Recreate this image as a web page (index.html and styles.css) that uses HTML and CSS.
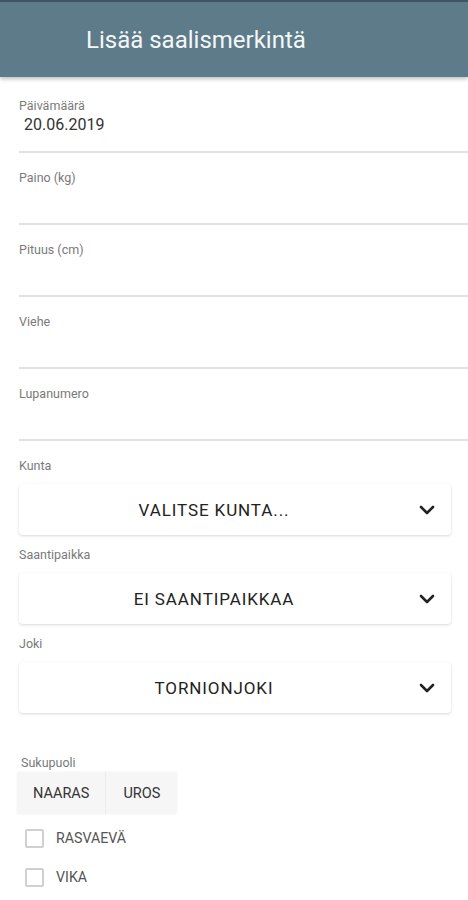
FILE: index.html
```html
<!DOCTYPE html>
<html lang="fi">
<head>
    <meta charset="UTF-8">
    <meta name="viewport" content="width=device-width, initial-scale=1.0">
    <title>Lisää saalismerkintä</title>
    <link rel="stylesheet" href="styles.css">
</head>
<body>

<header>
    <h1>Lisää saalismerkintä</h1>
</header>

<div class="container">
    <div class="field">
        <label>Päivämäärä</label>
        <div class="field-input">20.06.2019</div>
    </div>
    <div class="field">
        <label>Paino (kg)</label>
        <div class="field-input"></div>
    </div>
    <div class="field">
        <label>Pituus (cm)</label>
        <div class="field-input"></div>
    </div>
    <div class="field">
        <label>Viehe</label>
        <div class="field-input"></div>
    </div>
    <div class="field">
        <label>Lupanumero</label>
        <div class="field-input"></div>
    </div>

    <div class="picker-group">
        <label>Kunta</label>
        <div class="picker">
            <span class="picker-text">Valitse kunta...</span>
            <svg class="chevron" width="16" height="10" viewBox="0 0 16 10"><path d="M2 2 L8 8 L14 2" fill="none" stroke="#222" stroke-width="2.6" stroke-linecap="round" stroke-linejoin="round"/></svg>
        </div>
    </div>
    <div class="picker-group">
        <label>Saantipaikka</label>
        <div class="picker">
            <span class="picker-text">Ei saantipaikkaa</span>
            <svg class="chevron" width="16" height="10" viewBox="0 0 16 10"><path d="M2 2 L8 8 L14 2" fill="none" stroke="#222" stroke-width="2.6" stroke-linecap="round" stroke-linejoin="round"/></svg>
        </div>
    </div>
    <div class="picker-group">
        <label>Joki</label>
        <div class="picker">
            <span class="picker-text">Tornionjoki</span>
            <svg class="chevron" width="16" height="10" viewBox="0 0 16 10"><path d="M2 2 L8 8 L14 2" fill="none" stroke="#222" stroke-width="2.6" stroke-linecap="round" stroke-linejoin="round"/></svg>
        </div>
    </div>

    <div class="gender">
        <label>Sukupuoli</label>
        <div class="segment">
            <button type="button">Naaras</button>
            <button type="button">Uros</button>
        </div>
    </div>

    <div class="checks">
        <div class="check-row">
            <span class="checkbox"></span>
            <span class="check-label">Rasvaevä</span>
        </div>
        <div class="check-row">
            <span class="checkbox"></span>
            <span class="check-label">Vika</span>
        </div>
    </div>
</div>

</body>
</html>
```

FILE: styles.css
```css
body {
    font-family: Roboto, "Liberation Sans", sans-serif;
    margin: 0;
    padding: 0;
    background-color: white;
    color: #222;
}

header {
    background-color: #5e7b8a;
    border-top: 2px solid #3f5563;
    height: 75px;
    display: flex;
    align-items: center;
    box-shadow: 0 2px 4px rgba(0, 0, 0, 0.25);
}

header h1 {
    margin: 0 0 0 86px;
    font-size: 24px;
    font-weight: 400;
    color: #f4f7f8;
}

.container {
    padding: 4px 0 0 19px;
}

.field {
    padding-top: 18px;
}

.field label,
.picker-group label,
.gender label {
    display: block;
    font-size: 12.5px;
    line-height: 14px;
    color: #7a7a7a;
}

.field-input {
    height: 38px;
    padding-left: 5px;
    font-size: 16px;
    line-height: 24px;
    color: #333;
    border-bottom: 2px solid #e2e2e2;
}

.picker-group {
    margin-right: 17px;
}

.field + .picker-group {
    margin-top: 18px;
}

.picker {
    display: flex;
    align-items: center;
    height: 51px;
    margin: 11px 0 13px;
    background: white;
    border-radius: 4px;
    box-shadow: 0 1px 3px rgba(0, 0, 0, 0.16);
}

.picker-text {
    flex: 1;
    text-align: center;
    font-size: 17px;
    letter-spacing: 0.9px;
    text-transform: uppercase;
    color: #222;
}

.chevron {
    margin: 0 16px 0 10px;
}

.gender {
    margin-top: 43px;
    padding-left: 2px;
}

.segment {
    display: inline-flex;
    margin: 2px 0 0 -4px;
    background: #f6f6f6;
    border-radius: 3px;
    box-shadow: 0 0 2px rgba(0, 0, 0, 0.08);
}

.segment button {
    font-family: inherit;
    font-size: 14.5px;
    text-transform: uppercase;
    color: #333;
    background: none;
    border: none;
    height: 42px;
    padding: 0 16px;
}

.segment button + button {
    border-left: 1px solid #ececec;
    padding: 0 17px;
}

.checks {
    display: flex;
    flex-direction: column;
    gap: 19px;
    margin: 14px 0 0 6px;
}

.check-row {
    display: flex;
    align-items: center;
    gap: 12px;
    height: 20px;
}

.checkbox {
    width: 15px;
    height: 15px;
    border: 2px solid #d0d0d0;
    border-radius: 2px;
}

.check-label {
    font-size: 14.2px;
    text-transform: uppercase;
    color: #555;
}
```
